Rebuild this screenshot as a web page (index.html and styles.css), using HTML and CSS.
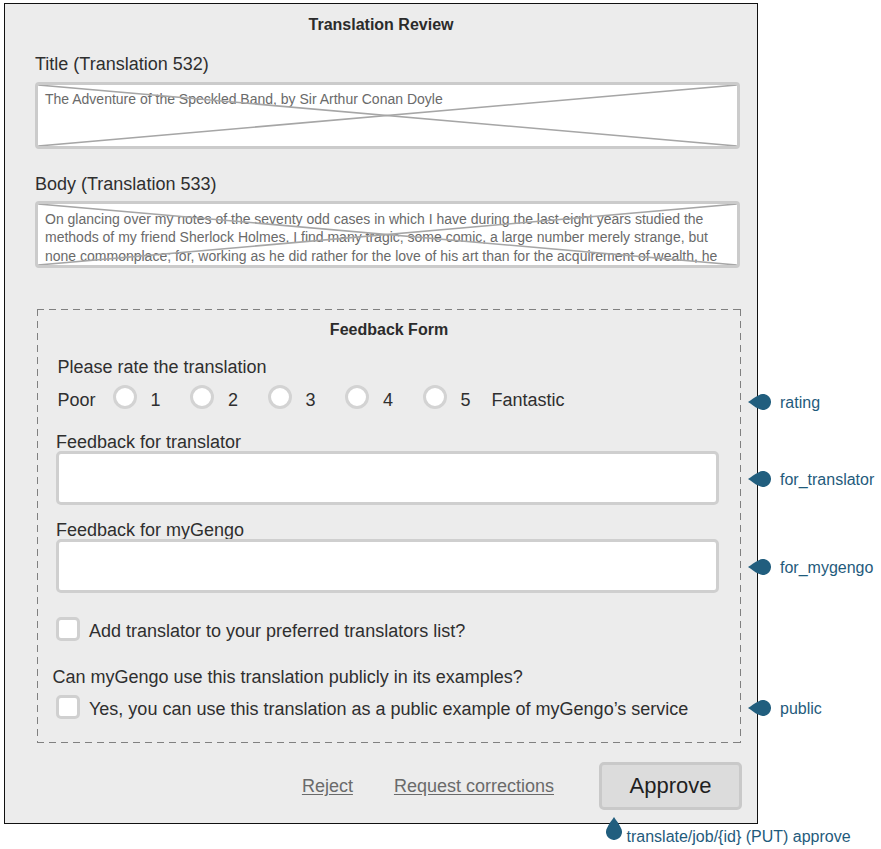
FILE: index.html
```html
<!DOCTYPE html>
<html lang="en">
<head>
<meta charset="utf-8">
<title>Translation Review</title>
<link rel="stylesheet" href="styles.css">
</head>
<body>
<div class="stage">
  <div class="panel">
    <h1 class="panel-title">Translation Review</h1>

    <div class="field-label label-title">Title (Translation 532)</div>
    <div class="preview preview-title">
      <p class="preview-text">The Adventure of the Speckled Band, by Sir Arthur Conan Doyle</p>
      <svg class="cross" viewBox="0 0 100 100" preserveAspectRatio="none"><line x1="0" y1="0" x2="100" y2="100"/><line x1="0" y1="100" x2="100" y2="0"/></svg>
    </div>

    <div class="field-label label-body">Body (Translation 533)</div>
    <div class="preview preview-body">
      <p class="preview-text">On glancing over my notes of the seventy odd cases in which I have during the last eight years studied the<br>methods of my friend Sherlock Holmes, I find many tragic, some comic, a large number merely strange, but<br>none commonplace; for, working as he did rather for the love of his art than for the acquirement of wealth, he</p>
      <svg class="cross" viewBox="0 0 100 100" preserveAspectRatio="none"><line x1="0" y1="0" x2="100" y2="100"/><line x1="0" y1="100" x2="100" y2="0"/></svg>
    </div>

    <section class="feedback">
      <h2 class="feedback-title">Feedback Form</h2>
      <div class="rate-label">Please rate the translation</div>
      <div class="rating">
        <span class="rating-end poor">Poor</span>
        <span class="option"><span class="radio"></span><span class="num">1</span></span>
        <span class="option"><span class="radio"></span><span class="num">2</span></span>
        <span class="option"><span class="radio"></span><span class="num">3</span></span>
        <span class="option"><span class="radio"></span><span class="num">4</span></span>
        <span class="option option-last"><span class="radio"></span><span class="num">5</span></span>
        <span class="rating-end fantastic">Fantastic</span>
      </div>

      <div class="input-label label-translator">Feedback for translator</div>
      <div class="text-input input-translator"></div>

      <div class="input-label label-gengo">Feedback for myGengo</div>
      <div class="text-input input-gengo"></div>

      <div class="check-row check-preferred">
        <span class="checkbox"></span>
        <span class="check-text">Add translator to your preferred translators list?</span>
      </div>

      <div class="question">Can myGengo use this translation publicly in its examples?</div>

      <div class="check-row check-public">
        <span class="checkbox"></span>
        <span class="check-text">Yes, you can use this translation as a public example of myGengo’s service</span>
      </div>
    </section>

    <div class="actions">
      <a class="link link-reject">Reject</a>
      <a class="link link-request">Request corrections</a>
      <button class="approve" type="button">Approve</button>
    </div>
  </div>

  <div class="note note-rating">
    <svg class="pin" width="23" height="16" viewBox="0 0 23 16"><path d="M0 8 C3 6.2 7 2.6 10.8 1.2 A8 8 0 1 1 10.8 14.8 C7 13.4 3 9.8 0 8 Z"/></svg>
    <span class="note-text">rating</span>
  </div>
  <div class="note note-translator">
    <svg class="pin" width="23" height="16" viewBox="0 0 23 16"><path d="M0 8 C3 6.2 7 2.6 10.8 1.2 A8 8 0 1 1 10.8 14.8 C7 13.4 3 9.8 0 8 Z"/></svg>
    <span class="note-text">for_translator</span>
  </div>
  <div class="note note-gengo">
    <svg class="pin" width="23" height="16" viewBox="0 0 23 16"><path d="M0 8 C3 6.2 7 2.6 10.8 1.2 A8 8 0 1 1 10.8 14.8 C7 13.4 3 9.8 0 8 Z"/></svg>
    <span class="note-text">for_mygengo</span>
  </div>
  <div class="note note-public">
    <svg class="pin" width="23" height="16" viewBox="0 0 23 16"><path d="M0 8 C3 6.2 7 2.6 10.8 1.2 A8 8 0 1 1 10.8 14.8 C7 13.4 3 9.8 0 8 Z"/></svg>
    <span class="note-text">public</span>
  </div>
  <div class="note note-approve">
    <svg class="pin" width="16" height="23" viewBox="0 0 16 23"><path d="M8 0 C9.8 3 13.4 7 14.8 10.8 A8 8 0 1 1 1.2 10.8 C2.6 7 6.2 3 8 0 Z"/></svg>
    <span class="note-text note-text-approve">translate/job/{id} (PUT) approve</span>
  </div>
</div>
</body>
</html>
```

FILE: styles.css
```css
html, body {
  margin: 0;
  padding: 0;
  background: #ffffff;
}

body {
  font-family: "Liberation Sans", Arial, Helvetica, sans-serif;
  color: #333333;
}

.stage {
  position: relative;
  width: 881px;
  height: 849px;
  overflow: hidden;
}

.panel {
  box-sizing: border-box;
  width: 754px;
  margin: 3px 0 0 4px;
  border: 1px solid #111111;
  background: #ececec;
  padding: 11px 17px 13px 30px;
  display: flex;
  flex-direction: column;
}

.panel-title {
  margin: 0 -17px 0 -30px;
  font-size: 16px;
  line-height: 20px;
  font-weight: bold;
  text-align: center;
  color: #2b2b2b;
}

.field-label {
  font-size: 18px;
  line-height: 22px;
  color: #2f2f2f;
}

.label-title {
  margin-top: 18px;
}

.label-body {
  margin-top: 24px;
}

.preview {
  position: relative;
  box-sizing: border-box;
  height: 67px;
  border: 3px solid #cbcbcb;
  border-radius: 4px;
  background: #ffffff;
  overflow: hidden;
  padding: 5px 10px 0 7px;
}

.preview-title {
  margin-top: 7px;
}

.preview-body {
  margin-top: 6px;
  padding-top: 6px;
}

.preview-text {
  margin: 0;
  font-size: 14px;
  line-height: 18.3px;
  color: #6a6a6a;
  white-space: nowrap;
}

.cross {
  position: absolute;
  left: 0;
  top: 0;
  width: 100%;
  height: 100%;
}

.cross line {
  stroke: #a6a6a6;
  stroke-width: 1.6;
  vector-effect: non-scaling-stroke;
}

.feedback {
  box-sizing: border-box;
  width: 704px;
  margin: 41px 0 0 2px;
  padding: 11px 22px 23.5px 19px;
  display: flex;
  flex-direction: column;
  background:
    repeating-linear-gradient(90deg, #808080 0 7px, transparent 7px 12px) left top / 100% 1px no-repeat,
    repeating-linear-gradient(90deg, #808080 0 7px, transparent 7px 12px) left bottom / 100% 1px no-repeat,
    repeating-linear-gradient(180deg, #808080 0 7px, transparent 7px 12px) left top / 1px 100% no-repeat,
    repeating-linear-gradient(180deg, #808080 0 7px, transparent 7px 12px) right top / 1px 100% no-repeat;
}

.feedback-title {
  margin: 0 -22px 0 -19px;
  font-size: 16px;
  line-height: 20px;
  font-weight: bold;
  text-align: center;
  color: #2b2b2b;
}

.rate-label {
  margin: 16px 0 0 1.5px;
  font-size: 18px;
  line-height: 22px;
  color: #2f2f2f;
}

.rating {
  margin: 7px 0 0 1.5px;
  display: flex;
  align-items: flex-start;
  font-size: 18px;
  line-height: 22px;
  color: #2f2f2f;
}

.rating-end {
  margin-top: 3.5px;
}

.poor {
  margin-right: 17px;
}

.fantastic {
  margin-left: 21px;
}

.option {
  flex: none;
  width: 77.5px;
  display: flex;
  align-items: flex-start;
}

.option-last {
  width: auto;
}

.radio {
  box-sizing: border-box;
  flex: none;
  width: 24px;
  height: 24px;
  border: 3px solid #d3d3d3;
  border-radius: 50%;
  background: #ffffff;
}

.num {
  margin: 3.5px 0 0 14px;
}

.input-label {
  font-size: 18px;
  line-height: 20px;
  color: #2f2f2f;
}

.label-translator {
  margin-top: 21px;
}

.label-gengo {
  margin-top: 15px;
}

.text-input {
  position: relative;
  box-sizing: border-box;
  height: 54px;
  border: 3px solid #cfcfcf;
  border-radius: 5px;
  background: #ffffff;
}

.input-translator {
  margin-top: -0.5px;
}

.input-gengo {
  margin-top: -1px;
}

.check-row {
  display: flex;
  align-items: flex-start;
  font-size: 18px;
  line-height: 22px;
  color: #2f2f2f;
}

.check-preferred {
  margin-top: 24px;
}

.check-public {
  margin-top: 7px;
}

.checkbox {
  box-sizing: border-box;
  flex: none;
  width: 24px;
  height: 24px;
  border: 3px solid #d0d0d0;
  border-radius: 5px;
  background: #ffffff;
}

.check-text {
  margin: 2.5px 0 0 9px;
}

.question {
  margin: 24.5px 0 0 -3.5px;
  font-size: 18px;
  line-height: 22px;
  color: #2f2f2f;
}

.actions {
  margin: 19px -2px 0 0;
  display: flex;
  justify-content: flex-end;
  align-items: center;
}

.link {
  font-size: 18px;
  line-height: 22px;
  color: #6a6a6a;
  text-decoration: underline;
  text-underline-offset: 2px;
  cursor: pointer;
}

.link-reject {
  margin-right: 41px;
}

.link-request {
  margin-right: 45px;
}

.approve {
  box-sizing: border-box;
  width: 143px;
  height: 48px;
  padding: 0;
  border: 3px solid #c9c9c9;
  border-radius: 5px;
  background: #dcdcdc;
  font-family: "Liberation Sans", Arial, Helvetica, sans-serif;
  font-size: 22px;
  line-height: 26px;
  color: #1f1f1f;
}

.note {
  position: absolute;
  left: 748px;
  display: flex;
  align-items: flex-start;
}

.note-rating { top: 393.7px; }
.note-translator { top: 471.3px; }
.note-gengo { top: 559.3px; }
.note-public { top: 700.3px; }

.note-approve {
  left: 605.5px;
  top: 816.5px;
}

.pin {
  display: block;
  flex: none;
}

.pin path {
  fill: #215e7e;
}

.note-text {
  margin: 1px 0 0 9px;
  font-size: 16px;
  line-height: 16px;
  color: #1f5b7c;
  white-space: nowrap;
}

.note-text-approve {
  margin: 12.3px 0 0 5px;
}
```
